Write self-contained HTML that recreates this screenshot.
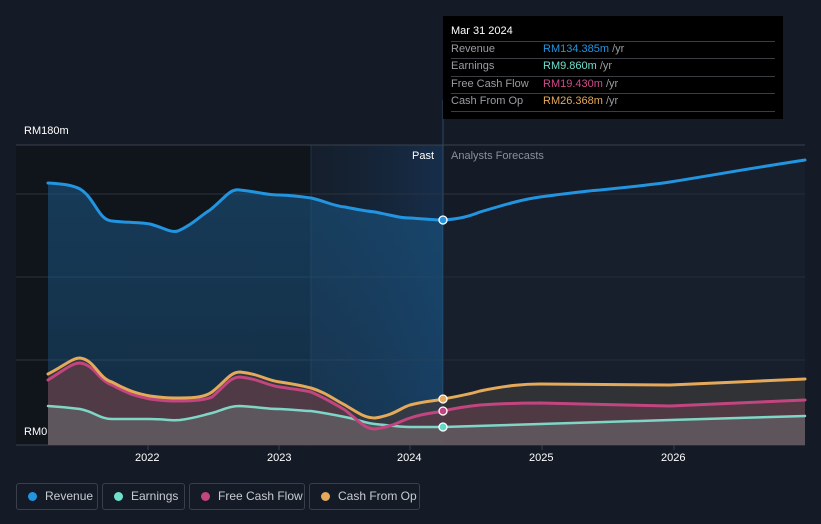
<!DOCTYPE html><html><head><style>
body{margin:0;background:#151b26;font-family:"Liberation Sans",sans-serif;width:821px;height:524px;overflow:hidden;position:relative}
.t{position:absolute;font-size:11px}
.lg{position:absolute;top:483px;height:27px;border:1px solid #3a404b;border-radius:3px;box-sizing:border-box;color:#c8cbd0;font-size:12px;line-height:25px;padding-left:28px}
.lg i{position:absolute;left:11px;top:8px;width:9px;height:9px;border-radius:50%}
</style></head><body>
<svg width="821" height="524" style="position:absolute;left:0;top:0">
<defs>
<linearGradient id="hl" x1="0" x2="1"><stop offset="0" stop-color="#15263a" stop-opacity=".3"/><stop offset="1" stop-color="#16365a" stop-opacity=".7"/></linearGradient>
<linearGradient id="rv" x1="0" y1="0" x2="0" y2="1"><stop offset="0" stop-color="#1b5a8a" stop-opacity=".55"/><stop offset="1" stop-color="#1b5a8a" stop-opacity=".35"/></linearGradient>
</defs>
<rect x="16" y="145" width="295" height="300" fill="#10141b"/>
<rect x="311" y="145" width="132" height="300" fill="url(#hl)"/>
<line x1="311" y1="145" x2="311" y2="445" stroke="#223246"/>
<g stroke="#2b323d" stroke-width="1"><line x1="16" y1="145" x2="805" y2="145" stroke="#3a414c"/><line x1="16" y1="194" x2="805" y2="194"/><line x1="16" y1="277" x2="805" y2="277"/><line x1="16" y1="360" x2="805" y2="360"/><line x1="16" y1="445" x2="805" y2="445" stroke="#3a414c"/></g>
<line x1="443" y1="100" x2="443" y2="445" stroke="#2e4a66"/>
<path d="M48,183 C64,184 72,185 80,189 C95,198 98,220 112,221 C130,223 140,222 150,224 C165,228 170,233 178,231 C192,225 200,216 210,210 C225,198 230,188 240,190 C260,192 265,195 280,195 C300,196 303,197 311,198 C325,201 333,206 345,207 C360,210 365,211 375,212 C395,216 400,218 410,218 C425,219 435,220 443,220 L443,445 L48,445Z" fill="url(#rv)"/>
<path d="M443,220 C460,219 470,216 480,212 C510,203 525,199 540,197 C570,193 585,191 600,190 C640,186 650,185 670,182 C720,174 740,170 805,160 L805,445 L443,445Z" fill="#1a2736" opacity=".35"/>
<path d="M48,374 C64,366 72,358 80,358 C95,360 98,378 112,382 C130,392 140,394 150,396 C165,398 170,398 180,398 C195,398 205,397 212,392 C225,382 230,372 240,372 C260,374 265,380 280,382 C300,385 303,386 311,388 C325,392 335,400 345,405 C360,414 365,418 375,418 C395,415 400,408 410,405 C425,401 435,401 443,399 C460,396 470,394 480,391 C510,385 525,384 540,384 L670,385 L805,379 L805,445 L48,445Z" fill="#3d3a3c" opacity=".7"/>
<path d="M48,380 C64,370 72,363 80,363 C95,365 98,380 112,385 C130,395 140,397 150,399 C165,401 170,401 180,401 C195,401 205,400 212,397 C225,386 230,377 240,377 C260,379 265,385 280,387 C300,390 303,390 311,392 C325,398 335,404 345,410 C360,422 365,429 375,429 C395,426 400,421 410,418 C425,413 435,413 443,411 C460,407 470,406 480,405 C510,403 525,403 540,403 L670,406 L805,400 L805,445 L48,445Z" fill="#5a3c48" opacity=".75"/>
<path d="M48,406 C64,407 72,408 80,409 C95,412 100,419 112,419 L150,419 C165,419 170,421 180,420 C195,418 200,416 212,413 C225,409 230,406 240,406 C260,407 265,409 280,409 C300,410 303,411 311,411 C325,413 335,415 345,417 C360,420 365,423 375,424 C395,426 400,427 410,427 L443,427 L540,424 L670,420 L805,416 L805,445 L48,445Z" fill="#6a6e70" opacity=".55"/>
<g fill="none" stroke-width="3" stroke-linecap="round">
<path d="M48,406 C64,407 72,408 80,409 C95,412 100,419 112,419 L150,419 C165,419 170,421 180,420 C195,418 200,416 212,413 C225,409 230,406 240,406 C260,407 265,409 280,409 C300,410 303,411 311,411 C325,413 335,415 345,417 C360,420 365,423 375,424 C395,426 400,427 410,427 L443,427 L540,424 L670,420 L805,416" stroke="#7fd6c6" stroke-width="2.5"/>
<path d="M48,380 C64,370 72,363 80,363 C95,365 98,380 112,385 C130,395 140,397 150,399 C165,401 170,401 180,401 C195,401 205,400 212,397 C225,386 230,377 240,377 C260,379 265,385 280,387 C300,390 303,390 311,392 C325,398 335,404 345,410 C360,422 365,429 375,429 C395,426 400,421 410,418 C425,413 435,413 443,411 C460,407 470,406 480,405 C510,403 525,403 540,403 L670,406 L805,400" stroke="#c2457f"/>
<path d="M48,374 C64,366 72,358 80,358 C95,360 98,378 112,382 C130,392 140,394 150,396 C165,398 170,398 180,398 C195,398 205,397 212,392 C225,382 230,372 240,372 C260,374 265,380 280,382 C300,385 303,386 311,388 C325,392 335,400 345,405 C360,414 365,418 375,418 C395,415 400,408 410,405 C425,401 435,401 443,399 C460,396 470,394 480,391 C510,385 525,384 540,384 L670,385 L805,379" stroke="#e5a95a"/>
<path d="M48,183 C64,184 72,185 80,189 C95,198 98,220 112,221 C130,223 140,222 150,224 C165,228 170,233 178,231 C192,225 200,216 210,210 C225,198 230,188 240,190 C260,192 265,195 280,195 C300,196 303,197 311,198 C325,201 333,206 345,207 C360,210 365,211 375,212 C395,216 400,218 410,218 C425,219 435,220 443,220 C460,219 470,216 480,212 C510,203 525,199 540,197 C570,193 585,191 600,190 C640,186 650,185 670,182 C720,174 740,170 805,160" stroke="#2294e0"/>
</g>
<g stroke="#fff" stroke-width="1.3"><circle cx="443" cy="220" r="4" fill="#2294e0"/><circle cx="443" cy="399" r="4" fill="#e5a95a"/><circle cx="443" cy="411" r="4" fill="#c2457f"/><circle cx="443" cy="427" r="4" fill="#5fdcc8"/></g>
<g stroke="#3a414c"><line x1="148" y1="445" x2="148" y2="450"/><line x1="279" y1="445" x2="279" y2="450"/><line x1="410" y1="445" x2="410" y2="450"/><line x1="542" y1="445" x2="542" y2="450"/><line x1="674" y1="445" x2="674" y2="450"/></g>
</svg>
<div class="t" style="left:24px;top:125px;color:#fff">RM180m</div>
<div class="t" style="left:24px;top:426px;color:#fff">RM0</div>
<div class="t" style="left:412px;top:150px;color:#fff">Past</div>
<div class="t" style="left:451px;top:150px;color:#8a909a">Analysts Forecasts</div>
<div class="t" style="left:135px;top:452px;color:#fff">2022</div>
<div class="t" style="left:267px;top:452px;color:#fff">2023</div>
<div class="t" style="left:397px;top:452px;color:#fff">2024</div>
<div class="t" style="left:529px;top:452px;color:#fff">2025</div>
<div class="t" style="left:661px;top:452px;color:#fff">2026</div>
<div style="position:absolute;left:443px;top:16px;width:340px;height:103px;background:#000;font-size:11px">
<div style="position:absolute;left:8px;top:9px;color:#fff">Mar 31 2024</div>
<div style="position:absolute;left:8px;right:8px;top:25px;border-top:1px solid #3a3d42"></div>
<div style="position:absolute;left:8px;top:27px;color:#9a9da2">Revenue</div><div style="position:absolute;left:100px;top:27px;color:#2294e0">RM134.385m <span style="color:#9a9da2">/yr</span></div>
<div style="position:absolute;left:8px;right:8px;top:42px;border-top:1px solid #3a3d42"></div>
<div style="position:absolute;left:8px;top:44px;color:#9a9da2">Earnings</div><div style="position:absolute;left:100px;top:44px;color:#6fe0cc">RM9.860m <span style="color:#9a9da2">/yr</span></div>
<div style="position:absolute;left:8px;right:8px;top:60px;border-top:1px solid #3a3d42"></div>
<div style="position:absolute;left:8px;top:62px;color:#9a9da2">Free Cash Flow</div><div style="position:absolute;left:100px;top:62px;color:#d04a8a">RM19.430m <span style="color:#9a9da2">/yr</span></div>
<div style="position:absolute;left:8px;right:8px;top:77px;border-top:1px solid #3a3d42"></div>
<div style="position:absolute;left:8px;top:79px;color:#9a9da2">Cash From Op</div><div style="position:absolute;left:100px;top:79px;color:#e5a95a">RM26.368m <span style="color:#9a9da2">/yr</span></div>
<div style="position:absolute;left:8px;right:8px;top:95px;border-top:1px solid #3a3d42"></div>
</div>
<div class="lg" style="left:16px;width:82px"><i style="background:#2294e0"></i>Revenue</div>
<div class="lg" style="left:102px;width:83px"><i style="background:#6fe0cc"></i>Earnings</div>
<div class="lg" style="left:189px;width:116px"><i style="background:#c2457f"></i>Free Cash Flow</div>
<div class="lg" style="left:309px;width:111px"><i style="background:#e5a95a"></i>Cash From Op</div>
</body></html>
